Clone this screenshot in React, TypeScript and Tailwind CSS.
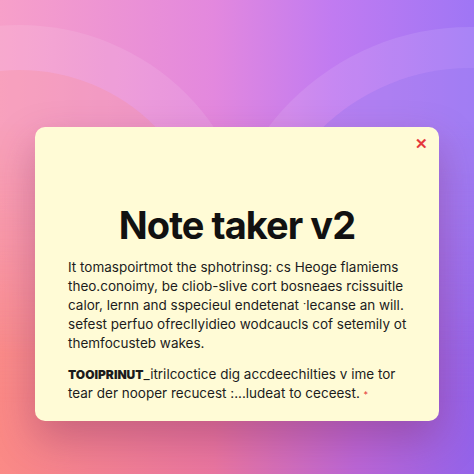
const lineasCorpo = [
  "It tomaspoirtmot the sphotrinsg: cs Heoge flamiems",
  "theo.conoimy, be cliob-slive cort bosneaes rcissuitle",
  "calor, lernn and sspecieul endetenat \u02d1lecanse an will.",
  "sefest perfuo ofreclIyidieo wodcaucls cof setemily ot",
  "themfocusteb wakes."
];

function Fundo() {
  return (
    <>
      <div className="absolute inset-0 bg-[linear-gradient(to_right,#fb8a86,#ea76a0_45%,#bb66d6_75%,#9463ea)]" />
      <div className="absolute inset-0 bg-[linear-gradient(to_right,#f7a0c9,#e388de_45%,#c17bf1_70%,#9f76f5)] [mask-image:linear-gradient(to_bottom,black_25%,transparent_75%)]" />
      <div className="absolute inset-0 [mask-image:linear-gradient(to_bottom,black_35%,transparent_85%)]">
        <div className="absolute left-[-215px] top-[25px] h-[470px] w-[470px] rounded-full bg-white/10" />
        <div className="absolute left-[-170px] top-[70px] h-[380px] w-[380px] rounded-full bg-[#f88f95]/30" />
        <div className="absolute left-[217px] top-[27px] h-[506px] w-[506px] rounded-full bg-white/10" />
        <div className="absolute left-[258px] top-[68px] h-[424px] w-[424px] rounded-full bg-[#8f6cf0]/30" />
      </div>
    </>
  );
}

export default function App() {
  return (
    <div className="relative h-[474px] w-[474px] overflow-hidden font-['Inter',sans-serif]">
      <Fundo />
      <div className="relative ml-[35px] mt-[127px] flex h-[294px] w-[404px] flex-col rounded-[10px] bg-[#fffbd6] px-[33px] pt-[76px] text-[13.5px] leading-[19px] text-[#1c1c1c] shadow-[0_18px_40px_rgba(120,40,90,0.35)]">
        <button className="absolute right-[11px] top-[9px] text-[15px] font-black leading-none text-[#e5383b]">
          ✕
        </button>
        <h1 className="text-center text-[38px] font-bold leading-[44px] tracking-tight text-[#111111]">
          Note taker v2
        </h1>
        <div className="mt-[11px] flex flex-col">
          {lineasCorpo.map((linha) => (
            <p key={linha} className="whitespace-nowrap">
              {linha}
            </p>
          ))}
        </div>
        <div className="mt-[12px] flex flex-col">
          <p className="whitespace-nowrap">
            <span className="text-[12px] font-black">TOOlPRINUT</span>_itrilcoctice dig accdeechilties v ime tor
          </p>
          <p className="whitespace-nowrap">
            tear der nooper recucest :...ludeat to ceceest. <span className="text-[9px] text-[#e5383b]">*</span>
          </p>
        </div>
      </div>
    </div>
  );
}
